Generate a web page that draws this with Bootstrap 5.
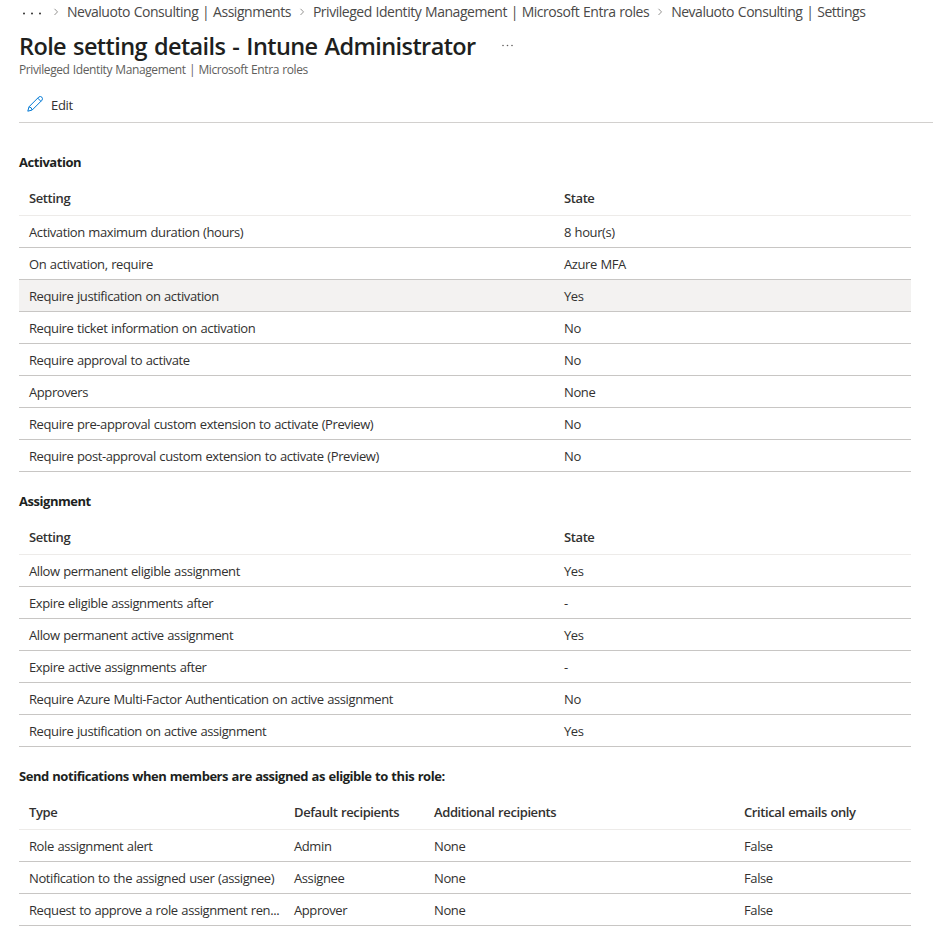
<!DOCTYPE html>
<html lang="en">
<head>
    <meta charset="UTF-8">
    <meta name="viewport" content="width=device-width, initial-scale=1.0">
    <title>Role setting details - Intune Administrator</title>
    <link rel="stylesheet" href="https://cdn.jsdelivr.net/npm/bootstrap@5.3.0/dist/css/bootstrap.min.css">
    <style>
        body { font-family: "Segoe UI", "Open Sans", "Noto Sans", sans-serif; font-size: 13px; line-height: 20px; letter-spacing: -.4px; word-spacing: .6px; color: #323130; background: #fff; overflow: hidden; }
        .crumbs { height: 24px; font-size: 14px; letter-spacing: -.47px; padding-left: 23px; color: #4a4948; white-space: nowrap; }
        .crumbs a { color: inherit; text-decoration: none; }
        .crumbs svg { margin: 0 8px; }
        .page-head { padding: 4px 0 0 19px; }
        .page-title { font-size: 23.5px; line-height: 34px; letter-spacing: -.6px; word-spacing: 1.5px; font-weight: 600; color: #201f1e; margin: 0; padding-top: 1px; height: 34px; white-space: nowrap; }
        .page-sub { font-size: 12px; line-height: 16px; color: #605e5c; }
        .toolbar { height: 45px; margin-left: 19px; padding: 17px 0 0 8px; border-bottom: 1px solid #d2d0ce; }
        .btn-edit { font-size: 13px; line-height: 20px; letter-spacing: -.33px; color: #323130; gap: 8px; }
        .btn-edit svg { margin-bottom: 2px; }
        .settings { padding: 29px 22px 0 19px; }
        .settings h2 { font-size: 13px; line-height: 20px; letter-spacing: -.46px; font-weight: 700; color: #201f1e; margin: 0 0 8px; }
        .settings .table { table-layout: fixed; border-collapse: separate; border-spacing: 0; margin-bottom: 19px; color: #323130; --bs-table-color: #323130; }
        .settings .table th, .settings .table td { padding: 0 5px 0 10px; border-bottom: 1px solid #c8c6c4; vertical-align: middle; height: 32px; line-height: 20px; }
        .settings .table th { height: 36px; font-weight: 600; border-color: #edebe9; }
        .settings .table .row-hover td { background: #f3f2f1; }
        .w-setting { width: 535px; }
        .w-type { width: 265px; }
        .w-default { width: 140px; }
        .w-extra { width: 310px; }
    </style>
</head>
<body>

    <!-- Breadcrumb -->
    <nav class="crumbs d-flex align-items-center">
        <svg class="m-0 mt-1" width="20" height="4" viewBox="0 0 20 4" fill="#323130"><circle cx="1" cy="1.500" r="1"/><circle cx="9" cy="1.500" r="1"/><circle cx="17" cy="1.500" r="1"/></svg>
        <svg style="margin-left: 10px" width="6" height="8" viewBox="0 0 6 8" fill="none" stroke="#797775" stroke-width=".8"><path d="M1.500 .8 4.500 3.900 1.500 7"/></svg>
        <a href="#">Nevaluoto Consulting | Assignments</a>
        <svg width="6" height="8" viewBox="0 0 6 8" fill="none" stroke="#797775" stroke-width=".8"><path d="M1.500 .8 4.500 3.900 1.500 7"/></svg>
        <a href="#">Privileged Identity Management | Microsoft Entra roles</a>
        <svg width="6" height="8" viewBox="0 0 6 8" fill="none" stroke="#797775" stroke-width=".8"><path d="M1.500 .8 4.500 3.900 1.500 7"/></svg>
        <a href="#">Nevaluoto Consulting | Settings</a>
    </nav>

    <!-- Title -->
    <header class="page-head">
        <div class="d-flex align-items-center">
            <h1 class="page-title">Role setting details - Intune Administrator</h1>
            <svg class="ms-4" width="14" height="4" viewBox="0 0 14 4" fill="#605e5c"><circle cx="3" cy="2.500" r=".8"/><circle cx="7.500" cy="2.500" r=".8"/><circle cx="12" cy="2.500" r=".8"/></svg>
        </div>
        <div class="page-sub"><span>Privileged Identity Management | Microsoft Entra roles</span></div>
    </header>

    <!-- Command bar -->
    <div class="toolbar">
        <button class="btn btn-edit d-flex align-items-center p-0 border-0">
            <svg width="16" height="16" viewBox="0 0 16 16" fill="none" stroke="#0078d4" stroke-linejoin="round"><path d="M.8 15.200 2 10.800 11.800 1Q13.400 -.1 14.900 1.200 16 2.700 15 4.200L5.200 14ZM2 10.800Q4.700 11.200 5.200 14M10.700 2.100 13.900 5.300"/></svg>
            <span>Edit</span>
        </button>
    </div>

    <main class="settings">
        <h2>Activation</h2>
        <table class="table">
            <thead>
                <tr><th class="w-setting">Setting</th><th>State</th></tr>
            </thead>
            <tbody>
                <tr><td>Activation maximum duration (hours)</td><td>8 hour(s)</td></tr>
                <tr><td>On activation, require</td><td>Azure MFA</td></tr>
                <tr class="row-hover"><td>Require justification on activation</td><td>Yes</td></tr>
                <tr><td>Require ticket information on activation</td><td>No</td></tr>
                <tr><td>Require approval to activate</td><td>No</td></tr>
                <tr><td>Approvers</td><td>None</td></tr>
                <tr><td>Require pre-approval custom extension to activate (Preview)</td><td>No</td></tr>
                <tr><td>Require post-approval custom extension to activate (Preview)</td><td>No</td></tr>
            </tbody>
        </table>

        <h2>Assignment</h2>
        <table class="table">
            <thead>
                <tr><th class="w-setting">Setting</th><th>State</th></tr>
            </thead>
            <tbody>
                <tr><td>Allow permanent eligible assignment</td><td>Yes</td></tr>
                <tr><td>Expire eligible assignments after</td><td>-</td></tr>
                <tr><td>Allow permanent active assignment</td><td>Yes</td></tr>
                <tr><td>Expire active assignments after</td><td>-</td></tr>
                <tr><td>Require Azure Multi-Factor Authentication on active assignment</td><td>No</td></tr>
                <tr><td>Require justification on active assignment</td><td>Yes</td></tr>
            </tbody>
        </table>

        <h2>Send notifications when members are assigned as eligible to this role:</h2>
        <table class="table">
            <thead>
                <tr>
                    <th class="w-type">Type</th>
                    <th class="w-default">Default recipients</th>
                    <th class="w-extra">Additional recipients</th>
                    <th>Critical emails only</th>
                </tr>
            </thead>
            <tbody>
                <tr><td class="text-nowrap">Role assignment alert</td><td>Admin</td><td>None</td><td>False</td></tr>
                <tr><td class="text-nowrap">Notification to the assigned user (assignee)</td><td>Assignee</td><td>None</td><td>False</td></tr>
                <tr><td class="text-nowrap">Request to approve a role assignment ren...</td><td>Approver</td><td>None</td><td>False</td></tr>
            </tbody>
        </table>
    </main>

    <script src="https://cdn.jsdelivr.net/npm/bootstrap@5.3.0/dist/js/bootstrap.bundle.min.js"></script>
</body>
</html>
